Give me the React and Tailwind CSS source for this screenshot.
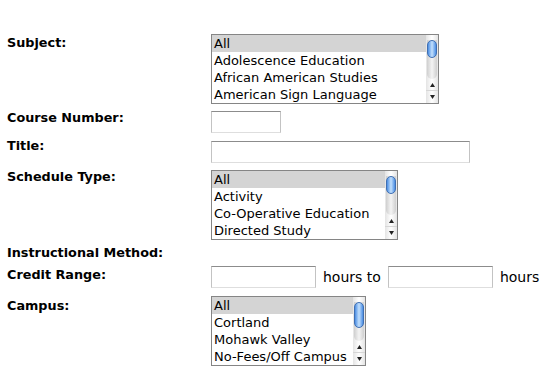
import React from 'react';

const subjects = ['All', 'Adolescence Education', 'African American Studies', 'American Sign Language'];
const scheduleTypes = ['All', 'Activity', 'Co-Operative Education', 'Directed Study'];
const campuses = ['All', 'Cortland', 'Mohawk Valley', 'No-Fees/Off Campus'];

function ScrollBar({ thumb }) {
  return (
    <div className="flex w-[12px] shrink-0 flex-col bg-gradient-to-r from-[#e4e4e4] via-white to-[#e4e4e4]">
      <div className="flex flex-1 flex-col items-center pt-[5px]">
        <div className="flex w-[10px] flex-1 flex-col rounded-b-full bg-gradient-to-r from-[#cfcfcf] via-[#f4f4f4] to-[#cfcfcf]">
          <div
            className={`w-[10px] rounded-full border border-[#3f6fb3] bg-gradient-to-r from-[#4a8de2] via-[#c3e0fc] to-[#4a8de2] ${thumb}`}
          />
        </div>
      </div>
      <div className="flex h-[12px] items-center justify-center border-b border-[#d6d6d6]">
        <svg width="5" height="4" viewBox="0 0 5 4">
          <polygon points="2.5,0 5,4 0,4" fill="#222" />
        </svg>
      </div>
      <div className="flex h-[12px] items-center justify-center">
        <svg width="5" height="4" viewBox="0 0 5 4">
          <polygon points="0,0 5,0 2.5,4" fill="#222" />
        </svg>
      </div>
    </div>
  );
}

function ListBox({ items, width, thumb }) {
  return (
    <div className={`flex h-[70px] border border-[#858585] bg-white ${width}`}>
      <div className="min-w-0 flex-1 overflow-hidden">
        {items.map((item, i) => (
          <div
            key={item}
            className={`h-[17px] whitespace-nowrap pl-[2px] text-[13px] leading-[17px] text-black ${
              i === 0 ? 'bg-[#d4d4d4]' : ''
            }`}
          >
            {item}
          </div>
        ))}
      </div>
      <ScrollBar thumb={thumb} />
    </div>
  );
}

function TextBox({ width }) {
  return (
    <input
      type="text"
      className={`block h-[22px] border border-t-[#8c8c8c] border-x-[#c3c3c3] border-b-[#dedede] bg-white outline-none ${width}`}
    />
  );
}

function Label({ children, extra = '' }) {
  return (
    <div className={`w-[204px] shrink-0 text-[12.8px] font-bold leading-[15px] text-black ${extra}`}>
      {children}
    </div>
  );
}

export default function App() {
  return (
    <div
      className="h-[373px] w-[554px] overflow-hidden bg-white pl-[7px] pt-[34px]"
      style={{ fontFamily: '"DejaVu Sans", Verdana, sans-serif' }}
    >
      <div className="flex items-start">
        <Label extra="mt-[1px]">Subject:</Label>
        <ListBox items={subjects} width="w-[228px]" thumb="h-[18px]" />
      </div>

      <div className="mt-[6px] flex items-start">
        <Label>Course Number:</Label>
        <div className="mt-[1px]">
          <TextBox width="w-[70px]" />
        </div>
      </div>

      <div className="mt-[5px] flex items-start">
        <Label>Title:</Label>
        <div className="mt-[3px]">
          <TextBox width="w-[259px]" />
        </div>
      </div>

      <div className="mt-[6px] flex items-start">
        <Label>Schedule Type:</Label>
        <div className="mt-[1px]">
          <ListBox items={scheduleTypes} width="w-[187px]" thumb="h-[18px]" />
        </div>
      </div>

      <div className="mt-[5px] flex">
        <Label>Instructional Method:</Label>
      </div>

      <div className="mt-[4px] flex items-start">
        <Label extra="mt-[3px]">Credit Range:</Label>
        <div className="mt-[2px] flex items-center text-[14px] text-black">
          <TextBox width="w-[105px]" />
          <span className="ml-[7px] mr-[7px]">hours to</span>
          <TextBox width="w-[105px]" />
          <span className="ml-[7px]">hours</span>
        </div>
      </div>

      <div className="mt-[8px] flex items-start">
        <Label extra="mt-[2px]">Campus:</Label>
        <ListBox items={campuses} width="w-[155px]" thumb="h-[26px]" />
      </div>
    </div>
  );
}
